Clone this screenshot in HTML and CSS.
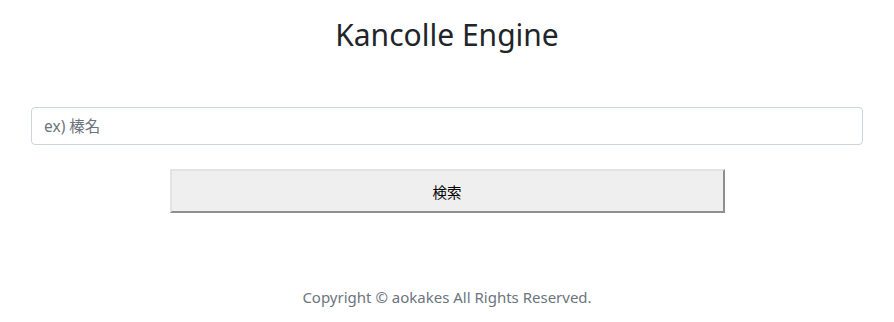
FILE: index.html
```
<!doctype html>
<html>
<head>
    <meta charset="utf-8"/>
    <title>Kancolle Engine</title>
    <link rel="stylesheet" href="styles.css">
</head>
<body>
    <div class="page">
        <h1 class="title">Kancolle Engine</h1>

        <form class="search">
            <input class="search-input" type="text" placeholder="ex) 榛名">
            <button class="search-button" type="button">検索</button>
        </form>

        <footer class="footer">Copyright &copy; aokakes All Rights Reserved.</footer>
    </div>
</body>
</html>
```

FILE: styles.css
```
* {
    box-sizing:border-box;
}
html {
    font-family:"Noto Sans","Noto Sans CJK JP",sans-serif;
}
body {
    margin:0;
    background:#ffffff;
    color:#212529;
}

.page {
    padding:14px 31px 0 31px;
    display:flex;
    flex-direction:column;
    align-items:center;
}

.title {
    margin:0;
    font-size:30px;
    font-weight:400;
    line-height:42px;
    color:#212529;
}

.search {
    width:100%;
    margin-top:51px;
    display:flex;
    flex-direction:column;
    align-items:center;
}
.search-input {
    width:100%;
    height:38px;
    padding:0 12px;
    border:1px solid #ced4da;
    border-radius:4px;
    font-family:"Noto Sans","Noto Sans CJK JP",sans-serif;
    font-size:15.5px;
    color:#495057;
    outline:none;
}
.search-input::placeholder {
    color:#6c757d;
}
.search-button {
    margin-top:24px;
    width:555px;
    height:44px;
    background:#efefef;
    border-top:2px solid #e3e3e3;
    border-left:2px solid #e3e3e3;
    border-bottom:2px solid #8f8f8f;
    border-right:2px solid #8f8f8f;
    font-family:"Noto Sans CJK JP",sans-serif;
    font-size:14.5px;
    color:#000000;
    padding:0;
}

.footer {
    margin-top:74px;
    font-size:15px;
    color:#6c757d;
}
```
